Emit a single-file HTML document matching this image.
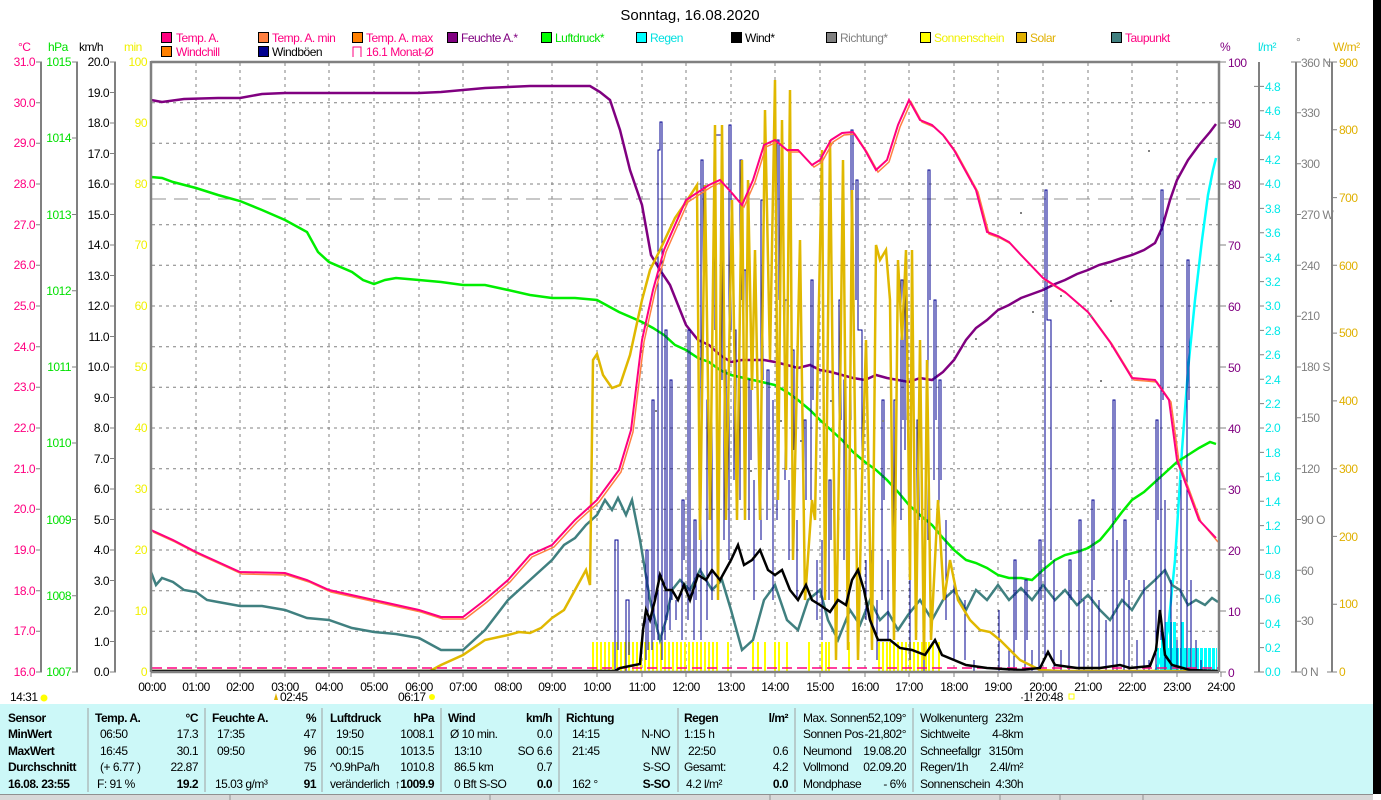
<!DOCTYPE html>
<html><head><meta charset="utf-8"><style>
html,body{margin:0;padding:0;background:#fff;width:1381px;height:800px;overflow:hidden}
svg{display:block;font-family:"Liberation Sans",sans-serif;font-size:12px;letter-spacing:-0.5px}
.b{font-weight:bold}
</style></head><body>
<svg width="1381" height="800" viewBox="0 0 1381 800" xmlns="http://www.w3.org/2000/svg">
<defs>
<pattern id="sun" width="4" height="30" patternUnits="userSpaceOnUse"><rect x="0" y="0" width="2" height="30" fill="#ffff00"/></pattern>
<pattern id="rain" width="4" height="40" patternUnits="userSpaceOnUse"><rect x="0" y="0" width="3" height="40" fill="#00ffff"/></pattern>
</defs>
<rect x="1373" y="0" width="8" height="794" fill="#000"/>
<text x="690" y="20" font-size="15" text-anchor="middle" letter-spacing="0">Sonntag, 16.08.2020</text>

<g stroke="#000" stroke-width="1">
<rect x="161.5" y="32.5" width="10" height="10" fill="#ff0080"/>
<rect x="258.5" y="32.5" width="10" height="10" fill="#ff8040"/>
<rect x="352.5" y="32.5" width="10" height="10" fill="#ff8000"/>
<rect x="447.5" y="32.5" width="10" height="10" fill="#800080"/>
<rect x="541.5" y="32.5" width="10" height="10" fill="#00ff00"/>
<rect x="636.5" y="32.5" width="10" height="10" fill="#00ffff"/>
<rect x="731.5" y="32.5" width="10" height="10" fill="#000"/>
<rect x="826.5" y="32.5" width="10" height="10" fill="#808080"/>
<rect x="920.5" y="32.5" width="10" height="10" fill="#ffff00"/>
<rect x="1016.5" y="32.5" width="10" height="10" fill="#e0b000"/>
<rect x="1111.5" y="32.5" width="10" height="10" fill="#408080"/>
<rect x="161.5" y="46.5" width="10" height="10" fill="#ff8000"/>
<rect x="258.5" y="46.5" width="10" height="10" fill="#000090"/>
</g>
<path d="M353 57V47h8v10" fill="none" stroke="#ff0080"/>
<g>
<text x="176" y="42" fill="#ff0080">Temp. A.</text>
<text x="272" y="42" fill="#ff0080">Temp. A. min</text>
<text x="366" y="42" fill="#ff0080">Temp. A. max</text>
<text x="461" y="42" fill="#800080">Feuchte A.*</text>
<text x="555" y="42" fill="#00e000">Luftdruck*</text>
<text x="650" y="42" fill="#00e0e0">Regen</text>
<text x="745" y="42" fill="#000">Wind*</text>
<text x="840" y="42" fill="#808080">Richtung*</text>
<text x="934" y="42" fill="#f0f000">Sonnenschein</text>
<text x="1030" y="42" fill="#e0b000">Solar</text>
<text x="1125" y="42" fill="#ff0080">Taupunkt</text>
<text x="176" y="56" fill="#ff0080">Windchill</text>
<text x="272" y="56" fill="#000">Windböen</text>
<text x="366" y="56" fill="#ff0080">16.1 Monat-Ø</text>
</g>
<text x="18" y="51" fill="#ff0080">°C</text>
<text x="48" y="51" fill="#00e000">hPa</text>
<text x="79" y="51" fill="#000">km/h</text>
<text x="124" y="51" fill="#f0f000">min</text>
<text x="1220" y="51" fill="#800080">%</text>
<text x="1258" y="51" fill="#00e0e0">l/m²</text>
<text x="1296" y="46" fill="#808080">°</text>
<text x="1333" y="51" fill="#e0b000">W/m²</text>

<g stroke="#808080" stroke-dasharray="3,4" stroke-width="1">
<path d="M196 63V671M240 63V671M285 63V671M329 63V671M374 63V671M419 63V671M463 63V671M508 63V671M552 63V671M597 63V671M642 63V671M686 63V671M731 63V671M775 63V671M820 63V671M865 63V671M909 63V671M954 63V671M998 63V671M1043 63V671M1088 63V671M1132 63V671M1177 63V671"/>
<path d="M152 102.7H1218M152 143.3H1218M152 184H1218M152 224.7H1218M152 265.3H1218M152 306H1218M152 346.7H1218M152 387.3H1218M152 428H1218M152 468.7H1218M152 509.3H1218M152 550H1218M152 590.7H1218M152 631.3H1218"/>
</g>
<path d="M152 199H1218" stroke="#909090" stroke-dasharray="14,8" stroke-width="1"/>

<g stroke="#808080" stroke-width="2" fill="none">
<path d="M41 62V672M77 62V672M115 62V672M1259 62V672M1296 62V672M1332 62V672"/>
</g>
<g stroke="#808080" stroke-width="1">
<path d="M36 62h6M36 102.7h6M36 143.3h6M36 184h6M36 224.7h6M36 265.3h6M36 306h6M36 346.7h6M36 387.3h6M36 428h6M36 468.7h6M36 509.3h6M36 550h6M36 590.7h6M36 631.3h6M36 672h6"/>
<path d="M72 62h6M72 138h6M72 214.5h6M72 290.75h6M72 367h6M72 443h6M72 519.5h6M72 595.75h6M72 672h6"/>
<path d="M110 62h6M110 92.5h6M110 123h6M110 153.5h6M110 184h6M110 214.5h6M110 245h6M110 275.5h6M110 306h6M110 336.5h6M110 367h6M110 397.5h6M110 428h6M110 458.5h6M110 489h6M110 519.5h6M110 550h6M110 580.5h6M110 611h6M110 641.5h6M110 672h6"/>
<path d="M1220 62h6M1220 123h6M1220 184h6M1220 245h6M1220 306h6M1220 367h6M1220 428h6M1220 489h6M1220 550h6M1220 611h6M1220 672h6"/>
<path d="M1254 86.4h10M1259 110.8h5M1259 135.2h5M1259 159.6h5M1259 184h5M1259 208.4h5M1259 232.8h5M1259 257.2h5M1259 281.6h5M1259 306h5M1259 330.4h5M1259 354.8h5M1259 379.2h5M1259 403.6h5M1259 428h5M1259 452.4h5M1259 476.8h5M1259 501.2h5M1259 525.6h5M1259 550h5M1259 574.4h5M1259 598.8h5M1259 623.2h5M1259 647.6h5M1254 672h10"/>
<path d="M1291 62h10M1296 112.8h5M1296 163.7h5M1296 214.5h5M1296 265.3h5M1296 316.2h5M1296 367h5M1296 417.8h5M1296 468.7h5M1296 519.5h5M1296 570.3h5M1296 621.2h5M1291 672h10"/>
<path d="M1327 62h10M1332 129.8h5M1332 197.6h5M1332 265.3h5M1332 333.1h5M1332 400.9h5M1332 468.7h5M1332 536.4h5M1332 604.2h5M1327 672h10"/>
</g>
<g fill="#ff0080" text-anchor="end">
<text x="35" y="66">31.0</text><text x="35" y="107">30.0</text><text x="35" y="147">29.0</text><text x="35" y="188">28.0</text><text x="35" y="229">27.0</text><text x="35" y="269">26.0</text><text x="35" y="310">25.0</text><text x="35" y="351">24.0</text><text x="35" y="391">23.0</text><text x="35" y="432">22.0</text><text x="35" y="473">21.0</text><text x="35" y="513">20.0</text><text x="35" y="554">19.0</text><text x="35" y="595">18.0</text><text x="35" y="635">17.0</text><text x="35" y="676">16.0</text>
</g>
<g fill="#00e000" text-anchor="end">
<text x="71" y="66">1015</text><text x="71" y="142">1014</text><text x="71" y="219">1013</text><text x="71" y="295">1012</text><text x="71" y="371">1011</text><text x="71" y="447">1010</text><text x="71" y="524">1009</text><text x="71" y="600">1008</text><text x="71" y="676">1007</text>
</g>
<g fill="#000" text-anchor="end">
<text x="109" y="66">20.0</text><text x="109" y="97">19.0</text><text x="109" y="127">18.0</text><text x="109" y="158">17.0</text><text x="109" y="188">16.0</text><text x="109" y="219">15.0</text><text x="109" y="249">14.0</text><text x="109" y="280">13.0</text><text x="109" y="310">12.0</text><text x="109" y="341">11.0</text><text x="109" y="371">10.0</text><text x="109" y="402">9.0</text><text x="109" y="432">8.0</text><text x="109" y="463">7.0</text><text x="109" y="493">6.0</text><text x="109" y="524">5.0</text><text x="109" y="554">4.0</text><text x="109" y="585">3.0</text><text x="109" y="615">2.0</text><text x="109" y="646">1.0</text><text x="109" y="676">0.0</text>
</g>
<g fill="#f0f000" text-anchor="end">
<text x="147" y="66">100</text><text x="147" y="127">90</text><text x="147" y="188">80</text><text x="147" y="249">70</text><text x="147" y="310">60</text><text x="147" y="371">50</text><text x="147" y="432">40</text><text x="147" y="493">30</text><text x="147" y="554">20</text><text x="147" y="615">10</text><text x="147" y="676">0</text>
</g>
<g fill="#800080">
<text x="1228" y="67">100</text><text x="1228" y="128">90</text><text x="1228" y="189">80</text><text x="1228" y="250">70</text><text x="1228" y="311">60</text><text x="1228" y="372">50</text><text x="1228" y="433">40</text><text x="1228" y="494">30</text><text x="1228" y="555">20</text><text x="1228" y="616">10</text><text x="1228" y="677">0</text>
</g>
<g fill="#00e8e8">
<text x="1265" y="91">4.8</text><text x="1265" y="115">4.6</text><text x="1265" y="140">4.4</text><text x="1265" y="164">4.2</text><text x="1265" y="188">4.0</text><text x="1265" y="213">3.8</text><text x="1265" y="237">3.6</text><text x="1265" y="262">3.4</text><text x="1265" y="286">3.2</text><text x="1265" y="310">3.0</text><text x="1265" y="335">2.8</text><text x="1265" y="359">2.6</text><text x="1265" y="384">2.4</text><text x="1265" y="408">2.2</text><text x="1265" y="432">2.0</text><text x="1265" y="457">1.8</text><text x="1265" y="481">1.6</text><text x="1265" y="506">1.4</text><text x="1265" y="530">1.2</text><text x="1265" y="554">1.0</text><text x="1265" y="579">0.8</text><text x="1265" y="603">0.6</text><text x="1265" y="628">0.4</text><text x="1265" y="652">0.2</text><text x="1265" y="676">0.0</text>
</g>
<g fill="#808080">
<text x="1301" y="67">360 N</text><text x="1301" y="117">330</text><text x="1301" y="168">300</text><text x="1301" y="219">270 W</text><text x="1301" y="270">240</text><text x="1301" y="320">210</text><text x="1301" y="371">180 S</text><text x="1301" y="422">150</text><text x="1301" y="473">120</text><text x="1301" y="524">90 O</text><text x="1301" y="575">60</text><text x="1301" y="625">30</text><text x="1301" y="676">0 N</text>
</g>
<g fill="#e0b000">
<text x="1339" y="67">900</text><text x="1339" y="134">800</text><text x="1339" y="202">700</text><text x="1339" y="270">600</text><text x="1339" y="337">500</text><text x="1339" y="405">400</text><text x="1339" y="473">300</text><text x="1339" y="541">200</text><text x="1339" y="608">100</text><text x="1339" y="676">0</text>
</g>

<rect x="592" y="642" width="126" height="30" fill="url(#sun)"/>
<g fill="#ffff00">
<rect x="727" y="642" width="2" height="30"/><rect x="752" y="642" width="2" height="30"/><rect x="757" y="642" width="2" height="30"/><rect x="764" y="642" width="2" height="30"/><rect x="774" y="642" width="2" height="30"/><rect x="778" y="642" width="2" height="30"/><rect x="786" y="642" width="2" height="30"/><rect x="808" y="642" width="2" height="30"/><rect x="821" y="642" width="2" height="30"/><rect x="825" y="642" width="2" height="30"/><rect x="828" y="642" width="2" height="30"/><rect x="848" y="642" width="2" height="30"/><rect x="878" y="642" width="2" height="30"/><rect x="882" y="642" width="2" height="30"/><rect x="886" y="642" width="2" height="30"/><rect x="889" y="642" width="2" height="30"/><rect x="893" y="642" width="2" height="30"/><rect x="897" y="642" width="2" height="30"/><rect x="901" y="642" width="2" height="30"/><rect x="905" y="642" width="2" height="30"/><rect x="909" y="642" width="2" height="30"/><rect x="913" y="642" width="2" height="30"/><rect x="917" y="642" width="2" height="30"/><rect x="921" y="642" width="2" height="30"/><rect x="925" y="642" width="2" height="30"/><rect x="928" y="642" width="2" height="30"/><rect x="932" y="642" width="2" height="30"/><rect x="938" y="642" width="2" height="30"/>
</g>
<rect x="1157" y="648" width="60" height="24" fill="url(#rain)"/>
<g fill="#00ffff"><rect x="1161" y="632" width="3" height="40"/><rect x="1165" y="622" width="3" height="50"/><rect x="1169" y="622" width="3" height="50"/><rect x="1173" y="622" width="3" height="50"/><rect x="1181" y="622" width="3" height="50"/></g>
<path d="M1155 672L1162 655 1168 630 1175 560 1182 450 1188 370 1195 300 1202 240 1208 195 1213 170 1216 158" fill="none" stroke="#00ffff" stroke-width="2.5"/>

<polyline fill="none" stroke="#408080" stroke-width="2.5" points="151,572 156,585 162,578 173,582 184,590 196,592 207,600 218,602 240,606 262,606 285,610 307,618 329,620 352,628 374,632 396,634 419,638 441,650 463,650 474,640 485,630 508,600 530,580 552,560 564,545 575,538 586,525 597,515 605,500 612,510 618,498 626,515 632,500 640,540 650,600 660,640 666,620 672,590 680,580 690,590 700,570 712,590 722,580 731,610 742,650 753,640 764,600 775,585 787,620 798,630 808,600 820,590 828,620 838,640 850,610 860,625 870,600 880,620 888,612 898,630 908,615 920,600 932,620 943,600 954,590 966,610 976,590 987,600 998,585 1009,600 1021,588 1032,600 1043,585 1055,600 1065,590 1077,605 1088,595 1100,610 1110,620 1122,600 1132,610 1144,590 1155,580 1165,570 1172,585 1180,590 1188,605 1196,600 1205,605 1212,598 1218,602"/>

<polyline fill="none" stroke="#00ee00" stroke-width="2.5" points="151,177 162,178 173,182 196,188 218,195 240,201 262,210 285,220 307,232 318,252 329,262 352,272 363,280 374,284 385,280 396,278 419,280 441,282 463,285 485,285 508,290 530,295 552,298 575,298 597,300 619,312 642,322 653,328 664,335 675,345 686,350 698,358 709,362 720,370 731,375 753,380 775,385 787,392 798,400 810,410 820,420 831,430 842,440 853,452 865,462 876,470 887,480 898,492 909,505 920,515 932,525 943,538 954,550 966,560 976,563 987,568 998,575 1009,578 1021,578 1032,580 1043,570 1055,560 1065,555 1077,552 1088,548 1100,540 1110,528 1122,512 1132,500 1144,492 1155,482 1166,472 1177,462 1188,455 1199,448 1210,442 1216,444"/>

<polyline fill="none" stroke="#800080" stroke-width="2.5" points="151,100 162,102 184,99 218,98 240,98 262,94 285,93 329,93 374,93 419,93 441,92 463,90 485,88 508,87 530,86 552,86 575,86 590,86 600,92 610,100 620,130 630,170 642,205 651,255 660,270 670,285 680,310 686,325 698,340 709,345 720,355 731,362 742,360 753,360 764,360 775,362 787,365 798,368 810,365 820,370 831,372 842,375 853,378 865,380 876,375 887,378 898,380 909,382 920,378 932,380 943,372 954,360 966,340 976,328 987,320 998,310 1009,305 1021,298 1032,294 1043,290 1055,284 1065,280 1077,274 1088,270 1099,265 1110,262 1122,258 1132,255 1144,250 1155,243 1162,228 1170,200 1177,180 1188,160 1199,145 1210,132 1216,124"/>

<path fill="none" stroke="#000090" stroke-width="1" d="M615 672V540H618V650 M626 672V600H629V655 M646 660V550H648V650 M652 650V400H654V640 M658 640V150H660V122H662V250V660 M665 640V330H667V620 M670 630V380H672V600 M676 620V600 M682 640V500H684V560 M688 620V330H690V600 M694 640V520H696V600 M701 640V160H703V380 M707 620V400H709V520 M712 600V300 M715 330V135H722V380 M724 540V370H726V500 M729 560V125H731V330 M734 480V330H736V420 M740 500V160H742V300 M744 400V270H746V360 M749 520V380H751V460 M754 600V480 M761 540V200H763V380 M767 520V370H769V470 M773 600V400 M777 520V140H779V300 M785 480V300H787V400 M789 560V480 M792 520V350H794V450 M797 600V520 M804 560V420H806V500 M811 500V280H813V400 M817 620V560 M822 640V540 M829 600V480H831V540 M839 520V300H841V420 M844 560V380H846V460 M851 420V130H853V190 M856 300V180H858V330H862V520 M866 620V560 M872 640V550 M877 660V600 M882 600V400H884V500 M888 640V560 M894 600V400H896V480 M901 520V280H903V420 M905 450V260H907V420 M910 660V560 M917 620V420H919V520 M924 672V600 M928 540V170H930V300 M934 480V300H936V420 M939 520V380H941V480 M946 620V520 M954 660V580 M965 660V600 M974 672V660 M999 672V610 M1009 672V650 M1014 672V560H1016V640 M1025 672V580H1027V640 M1032 672V650 M1039 672V540H1041V600 M1045 660V190H1047V320H1051V560 M1054 672V560 M1061 672V650 M1069 672V560H1071V600 M1079 672V520H1081V600 M1084 672V600 M1092 672V500H1094V580 M1099 672V600 M1106 672V620 M1113 672V400H1115V520 M1117 672V540 M1124 672V520H1126V580 M1129 672V580 M1137 672V640 M1144 672V580 M1149 672V660 M1156 672V420H1158V520 M1161 640V190H1163V400 M1165 672V500 M1171 672V580 M1177 672V640 M1181 672V480 M1187 672V260H1189V400 M1191 672V580 M1196 672V640 M1201 672V660"/>

<polyline fill="none" stroke="#e0b800" stroke-width="2.5" points="151,671 430,671 441,665 463,655 485,640 508,635 519,632 530,633 541,628 552,618 564,610 575,590 586,570 590,585 593,360 597,354 603,375 612,388 620,385 630,355 642,300 650,270 660,250 675,218 686,202 697,185 700,540 705,185 710,520 715,125 718,600 722,125 726,520 732,200 737,520 742,160 745,520 748,180 752,390 755,250 760,520 765,110 770,360 775,80 778,500 782,120 786,470 790,90 793,560 800,240 805,600 812,500 815,520 818,350 822,150 825,600 830,140 836,660 840,400 843,160 848,650 852,190 858,660 862,480 866,340 872,650 876,245 880,260 886,250 890,300 894,640 898,260 902,340 906,250 910,580 912,250 916,640 920,340 924,660 927,360 931,640 938,500 944,600 950,560 958,600 970,620 980,630 990,632 1000,640 1020,660 1040,670 1060,671 1218,671"/>

<path d="M152 668H1218" stroke="#ff0080" stroke-width="1.5" stroke-dasharray="10,5"/>

<polyline fill="none" stroke="#ff8040" stroke-width="1.5" transform="translate(2,2)" points="151,530 173,540 196,552 218,562 240,572 285,573 307,580 329,590 374,600 419,610 441,617 463,617 485,600 508,580 530,555 552,545 575,520 597,500 619,470 631,430 642,340 653,290 664,250 686,200 709,185 720,180 731,192 742,205 753,180 764,145 775,140 787,150 798,150 812,165 820,160 831,140 842,133 853,132 865,150 876,170 887,160 898,125 909,100 920,120 932,125 943,135 954,150 976,190 987,232 998,236 1009,242 1021,255 1043,278 1065,292 1088,312 1110,342 1132,378 1155,380 1169,400 1177,460 1199,520 1216,540"/>
<polyline fill="none" stroke="#ff0080" stroke-width="2" points="151,530 173,540 196,552 218,562 240,572 285,573 307,580 329,590 374,600 419,610 441,617 463,617 485,600 508,580 530,555 552,545 575,520 597,500 619,470 631,430 642,340 653,290 664,250 686,200 709,185 720,180 731,192 742,205 753,180 764,145 775,140 787,150 798,150 812,165 820,160 831,140 842,133 853,132 865,150 876,170 887,160 898,125 909,100 920,120 932,125 943,135 954,150 976,190 987,232 998,236 1009,242 1021,255 1043,278 1065,292 1088,312 1110,342 1132,378 1155,380 1169,400 1177,460 1199,520 1216,538"/>

<polyline fill="none" stroke="#000" stroke-width="2.5" points="151,671 615,671 620,668 630,666 640,664 643,630 646,610 650,620 655,600 660,575 666,590 672,590 678,600 684,585 690,600 698,575 706,580 712,570 720,580 731,560 738,545 744,565 752,560 760,550 768,570 775,575 782,570 790,590 798,600 806,585 812,600 820,605 830,612 838,600 846,605 852,580 858,570 864,590 870,620 878,640 890,640 900,648 912,650 925,655 935,640 942,655 954,660 966,665 987,668 1021,670 1040,668 1048,652 1055,665 1077,668 1100,668 1120,665 1130,668 1150,666 1156,650 1160,610 1165,655 1172,665 1190,670 1218,671"/>

<g fill="#808080">
<rect x="1020" y="212" width="2" height="2"/><rect x="1060" y="295" width="2" height="2"/><rect x="1110" y="300" width="2" height="2"/><rect x="1148" y="150" width="2" height="2"/><rect x="975" y="338" width="2" height="2"/><rect x="1032" y="311" width="2" height="2"/><rect x="780" y="420" width="2" height="2"/><rect x="800" y="440" width="2" height="2"/><rect x="750" y="470" width="2" height="2"/><rect x="830" y="400" width="2" height="2"/><rect x="655" y="410" width="2" height="2"/><rect x="882" y="420" width="2" height="2"/><rect x="1100" y="380" width="2" height="2"/><rect x="1090" y="315" width="2" height="2"/>
</g>

<path d="M151 61V672M151 62H1219V672M151 672H1219" stroke="#808080" stroke-width="2.5" fill="none"/>
<g stroke="#808080"><path d="M151 672v5M196 672v5M240 672v5M285 672v5M329 672v5M374 672v5M419 672v5M463 672v5M508 672v5M552 672v5M597 672v5M642 672v5M686 672v5M731 672v5M775 672v5M820 672v5M865 672v5M909 672v5M954 672v5M998 672v5M1043 672v5M1088 672v5M1132 672v5M1177 672v5M1221 672v5"/></g>
<g text-anchor="middle" fill="#000">
<text x="152" y="691">00:00</text><text x="196" y="691">01:00</text><text x="240" y="691">02:00</text><text x="285" y="691">03:00</text><text x="329" y="691">04:00</text><text x="374" y="691">05:00</text><text x="419" y="691">06:00</text><text x="463" y="691">07:00</text><text x="508" y="691">08:00</text><text x="552" y="691">09:00</text><text x="597" y="691">10:00</text><text x="642" y="691">11:00</text><text x="686" y="691">12:00</text><text x="731" y="691">13:00</text><text x="775" y="691">14:00</text><text x="820" y="691">15:00</text><text x="865" y="691">16:00</text><text x="909" y="691">17:00</text><text x="954" y="691">18:00</text><text x="998" y="691">19:00</text><text x="1043" y="691">20:00</text><text x="1088" y="691">21:00</text><text x="1132" y="691">22:00</text><text x="1177" y="691">23:00</text><text x="1221" y="691">24:00</text>
</g>
<text x="10" y="701">14:31</text><circle cx="44" cy="698" r="3.5" fill="#ffff00"/>
<text x="280" y="701">02:45</text><path d="M274 700l2-7 2 7z" fill="#e0b000"/>
<text x="398" y="701">06:17</text><circle cx="432" cy="697" r="3" fill="#ffff00"/>
<text x="1020" y="701">·1!  20:48</text><rect x="1069" y="694" width="5" height="5" fill="none" stroke="#ffff00"/>

<rect x="0" y="704" width="1373" height="90" fill="#ccf8f8"/>
<rect x="0" y="794" width="1373" height="6" fill="#d8d8d8"/>
<path d="M0 794.5H1373M230 794V800M490 794V800M770 794V800M1000 794V800M1060 794V800M1143 794V800" stroke="#909090"/>
<g stroke="#a0a0a0"><path d="M88 708V792M205 708V792M322 708V792M441 708V792M559 708V792M678 708V792M795 708V792M913 708V792"/></g>
<g fill="#000">
<text x="8" y="722" class="b">Sensor</text><text x="8" y="738" class="b">MinWert</text><text x="8" y="755" class="b">MaxWert</text><text x="8" y="771" class="b">Durchschnitt</text><text x="8" y="788" class="b">16.08. 23:55</text>

<text x="95" y="722" class="b">Temp. A.</text><text x="198" y="722" class="b" text-anchor="end">°C</text>
<text x="100" y="738">06:50</text><text x="198" y="738" text-anchor="end">17.3</text>
<text x="100" y="755">16:45</text><text x="198" y="755" text-anchor="end">30.1</text>
<text x="100" y="771">(+ 6.77 )</text><text x="198" y="771" text-anchor="end">22.87</text>
<text x="97" y="788">F: 91 %</text><text x="198" y="788" class="b" text-anchor="end">19.2</text>

<text x="212" y="722" class="b">Feuchte A.</text><text x="316" y="722" class="b" text-anchor="end">%</text>
<text x="217" y="738">17:35</text><text x="316" y="738" text-anchor="end">47</text>
<text x="217" y="755">09:50</text><text x="316" y="755" text-anchor="end">96</text>
<text x="316" y="771" text-anchor="end">75</text>
<text x="215" y="788">15.03 g/m³</text><text x="316" y="788" class="b" text-anchor="end">91</text>

<text x="330" y="722" class="b">Luftdruck</text><text x="434" y="722" class="b" text-anchor="end">hPa</text>
<text x="336" y="738">19:50</text><text x="434" y="738" text-anchor="end">1008.1</text>
<text x="336" y="755">00:15</text><text x="434" y="755" text-anchor="end">1013.5</text>
<text x="330" y="771">^0.9hPa/h</text><text x="434" y="771" text-anchor="end">1010.8</text>
<text x="330" y="788">veränderlich</text><text x="434" y="788" class="b" text-anchor="end">↑1009.9</text>

<text x="448" y="722" class="b">Wind</text><text x="552" y="722" class="b" text-anchor="end">km/h</text>
<text x="450" y="738">Ø 10 min.</text><text x="552" y="738" text-anchor="end">0.0</text>
<text x="454" y="755">13:10</text><text x="552" y="755" text-anchor="end">SO 6.6</text>
<text x="454" y="771">86.5 km</text><text x="552" y="771" text-anchor="end">0.7</text>
<text x="454" y="788">0 Bft S-SO</text><text x="552" y="788" class="b" text-anchor="end">0.0</text>

<text x="566" y="722" class="b">Richtung</text>
<text x="572" y="738">14:15</text><text x="670" y="738" text-anchor="end">N-NO</text>
<text x="572" y="755">21:45</text><text x="670" y="755" text-anchor="end">NW</text>
<text x="670" y="771" text-anchor="end">S-SO</text>
<text x="572" y="788">162 °</text><text x="670" y="788" class="b" text-anchor="end">S-SO</text>

<text x="684" y="722" class="b">Regen</text><text x="788" y="722" class="b" text-anchor="end">l/m²</text>
<text x="684" y="738">1:15 h</text>
<text x="688" y="755">22:50</text><text x="788" y="755" text-anchor="end">0.6</text>
<text x="684" y="771">Gesamt:</text><text x="788" y="771" text-anchor="end">4.2</text>
<text x="686" y="788">4.2 l/m²</text><text x="788" y="788" class="b" text-anchor="end">0.0</text>

<text x="803" y="722">Max. Sonnen</text><text x="906" y="722" text-anchor="end">52,109°</text>
<text x="803" y="738">Sonnen Pos</text><text x="906" y="738" text-anchor="end">-21,802°</text>
<text x="803" y="755">Neumond</text><text x="906" y="755" text-anchor="end">19.08.20</text>
<text x="803" y="771">Vollmond</text><text x="906" y="771" text-anchor="end">02.09.20</text>
<text x="803" y="788">Mondphase</text><text x="906" y="788" text-anchor="end">- 6%</text>

<text x="920" y="722">Wolkenunterg</text><text x="1023" y="722" text-anchor="end">232m</text>
<text x="920" y="738">Sichtweite</text><text x="1023" y="738" text-anchor="end">4-8km</text>
<text x="920" y="755">Schneefallgr</text><text x="1023" y="755" text-anchor="end">3150m</text>
<text x="920" y="771">Regen/1h</text><text x="1023" y="771" text-anchor="end">2.4l/m²</text>
<text x="920" y="788">Sonnenschein</text><text x="1023" y="788" text-anchor="end">4:30h</text>
</g>
</svg>
</body></html>
